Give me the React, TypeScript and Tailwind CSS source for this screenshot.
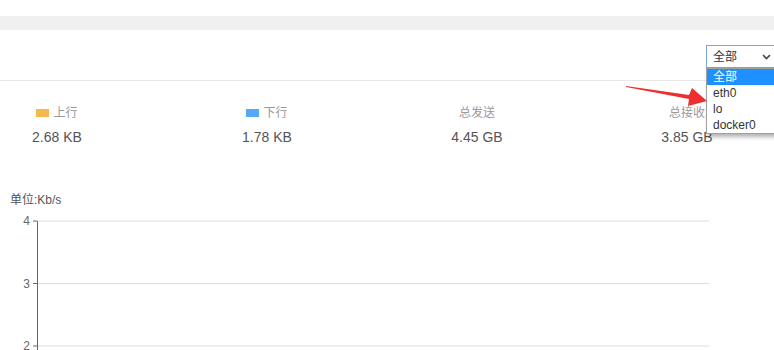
import React from 'react';

const stats = [
  { label: '上行', value: '2.68 KB', swatch: 'bg-[#f7b84b]' },
  { label: '下行', value: '1.78 KB', swatch: 'bg-[#58a8f8]' },
  { label: '总发送', value: '4.45 GB', swatch: '' },
  { label: '总接收', value: '3.85 GB', swatch: '' },
];

const options = ['全部', 'eth0', 'lo', 'docker0'];

const yTicks = [
  { label: '4', y: 11 },
  { label: '3', y: 73.5 },
  { label: '2', y: 136 },
];

export default function App() {
  return (
    <div className="relative h-[350px] w-[774px] overflow-hidden bg-white font-['Liberation_Sans','Noto_Sans_CJK_SC',sans-serif]">
      {/* top strip */}
      <div className="h-4 bg-white" />
      <div className="h-[14px] bg-[#f0f0f0]" />

      {/* toolbar with interface select */}
      <div className="flex h-[51px] justify-end border-b border-[#e8e8e8] pt-[15px]">
        <div className="relative -mr-[14px] h-[23px] w-[82px]">
          <div className="flex h-full items-center justify-between border border-[#7ba6d4] bg-white pl-[6px] pr-[16px] text-[12px] text-[#333]">
            <span>全部</span>
            <svg width="9" height="6" viewBox="0 0 9 6" className="mt-[1px]">
              <path d="M1 1l3.5 3.5L8 1" fill="none" stroke="#444" strokeWidth="1.6" />
            </svg>
          </div>
          <ul className="absolute left-0 top-[23px] z-10 w-full border border-[#a0a0a0] bg-white text-[12px] leading-[16px] text-[#333] shadow-[2px_3px_4px_rgba(0,0,0,0.3)]">
            {options.map((o, i) => (
              <li
                key={o}
                className={i === 0 ? 'bg-[#1e90ff] pl-[6px] text-white' : 'pl-[6px]'}
              >
                {o}
              </li>
            ))}
          </ul>
        </div>
      </div>

      {/* stats row */}
      <div className="-ml-[48px] grid w-[840px] grid-cols-4 pt-[24px]">
        {stats.map((s) => (
          <div key={s.label} className="flex flex-col items-center">
            <div className="flex h-4 items-center text-[12px] text-[#999]">
              {s.swatch && <span className={`mr-[4px] inline-block h-[8px] w-[13px] ${s.swatch}`} />}
              <span>{s.label}</span>
            </div>
            <div className="mt-[7px] text-[14px] leading-[18px] text-[#555]">{s.value}</div>
          </div>
        ))}
      </div>

      {/* chart */}
      <div className="pl-[10px] pt-[46px] text-[12px] leading-4 text-[#555]">单位:Kb/s</div>
      <svg width="774" height="140" className="mt-[2px] block">
        {yTicks.map((t) => (
          <g key={t.label}>
            <line x1="37" x2="709" y1={t.y} y2={t.y} stroke="#dcdcdc" strokeWidth="1" />
            <line x1="33" x2="37" y1={t.y} y2={t.y} stroke="#666" strokeWidth="1" />
            <text x="30" y={t.y + 4} textAnchor="end" fontSize="12" fill="#666">
              {t.label}
            </text>
          </g>
        ))}
        <line x1="37.5" x2="37.5" y1="11" y2="140" stroke="#666" strokeWidth="1" />
      </svg>

      {/* annotation arrow */}
      <svg width="774" height="350" className="pointer-events-none absolute left-0 top-0 z-20">
        <polygon
          points="626,86 689,95 692,88 707,101 688,106 689,99 626,87"
          fill="#ef2f2f"
        />
      </svg>
    </div>
  );
}
